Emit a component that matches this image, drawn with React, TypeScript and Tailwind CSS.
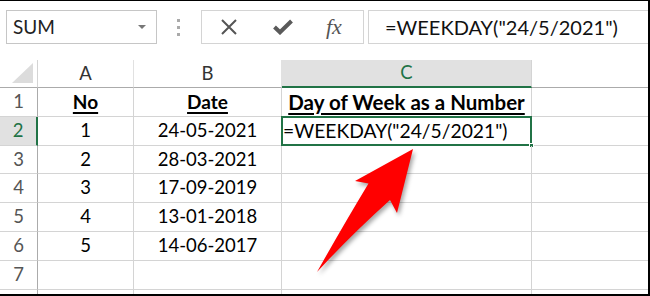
import React from "react";

const font = "font-['Lato','Noto_Sans',sans-serif]";

const rows = [
  { n: "1", a: "No", b: "Date", c: "Day of Week as a Number", head: true, h: "h-[29px]" },
  { n: "2", a: "1", b: "24-05-2021", c: '=WEEKDAY("24/5/2021")', sel: true, h: "h-[29px]" },
  { n: "3", a: "2", b: "28-03-2021", c: "", h: "h-[28px]" },
  { n: "4", a: "3", b: "17-09-2019", c: "", h: "h-[29px]" },
  { n: "5", a: "4", b: "13-01-2018", c: "", h: "h-[29px]" },
  { n: "6", a: "5", b: "14-06-2017", c: "", h: "h-[29px]" },
  { n: "7", a: "", b: "", c: "", h: "h-[29px]" },
];

export default function App() {
  return (
    <div
      className={`relative w-[650px] h-[296px] overflow-hidden bg-white border-t border-r-2 border-b-2 border-black ${font} text-[18.5px] text-black`}
    >
      {/* Toolbar */}
      <div className="h-[59px] flex items-start pt-[9px]">
        <div className="ml-[6px] w-[151px] h-[34px] border border-[#c6c6c6] flex items-center pl-[6px] pr-[10px]">
          <span className="text-[#222] text-[19px]">SUM</span>
          <span className="ml-auto w-0 h-0 border-l-[4px] border-r-[4px] border-t-[4px] border-l-transparent border-r-transparent border-t-[#777]" />
        </div>
        <div className="ml-[20px] w-[3px] h-[34px] flex flex-col items-center justify-center gap-[4px]">
          <span className="w-[3px] h-[3px] bg-[#aaa]" />
          <span className="w-[3px] h-[3px] bg-[#aaa]" />
          <span className="w-[3px] h-[3px] bg-[#aaa]" />
        </div>
        <div className="ml-[21px] w-[163px] h-[34px] border border-[#d4d4d4] flex items-center">
          <svg width="18" height="18" viewBox="0 0 18 18" className="ml-[18px]">
            <path d="M2 2 L16 16 M16 2 L2 16" stroke="#555" strokeWidth="2" fill="none" />
          </svg>
          <svg width="20" height="16" viewBox="0 0 20 16" className="ml-[35px]">
            <path d="M1.5 8 L7 13.3 L18.5 2" stroke="#5a5a5a" strokeWidth="4" fill="none" />
          </svg>
          <span className="ml-[33px] font-['Liberation_Serif',serif] italic text-[22px] text-[#555] leading-none">
            fx
          </span>
        </div>
        <div className="ml-[4px] flex-1 h-[34px] border border-r-0 border-[#d4d4d4] flex items-center pl-[16px]">
          <span className="text-[20px] text-[#111]">=WEEKDAY("24/5/2021")</span>
        </div>
      </div>

      {/* Column headers */}
      <div className="flex h-[28px]">
        <div className="w-[38px] relative border-b border-r border-b-[#ababab] border-r-[#d4d4d4]">
          <svg width="22" height="20" viewBox="0 0 22 20" className="absolute right-[3px] bottom-[4px]">
            <path d="M0 20 L21 20 L21 0 Z" fill="#dcdcdc" />
          </svg>
        </div>
        <div className="w-[96px] flex items-center justify-center border-b border-r border-b-[#ababab] border-r-[#e1e1e1] text-[#333]">
          A
        </div>
        <div className="w-[148px] flex items-center justify-center border-b border-r border-b-[#ababab] border-r-[#e1e1e1] text-[#333]">
          B
        </div>
        <div className="w-[250px] flex items-center justify-center bg-[#e1e1e1] border-b-2 border-r border-b-[#217346] border-r-[#d4d4d4] text-[#217346]">
          C
        </div>
        <div className="flex-1 border-b border-b-[#ababab]" />
      </div>

      {/* Rows */}
      {rows.map((r) => (
        <div key={r.n} className={`flex ${r.h}`}>
          <div
            className={`w-[38px] flex items-center justify-center border-b border-b-[#d4d4d4] ${
              r.sel
                ? "bg-[#e1e1e1] border-r-2 border-r-[#217346] text-[#217346]"
                : "border-r border-r-[#ababab] text-[#555]"
            }`}
          >
            {r.n}
          </div>
          <div className="w-[96px] flex items-center justify-center border-b border-r border-[#d4d4d4]">
            {r.head ? <span className="font-bold text-[19px] underline decoration-2 underline-offset-[3px]">{r.a}</span> : r.a}
          </div>
          <div className="w-[148px] flex items-center justify-center border-b border-r border-[#d4d4d4]">
            {r.head ? <span className="font-bold text-[19px] underline decoration-2 underline-offset-[3px]">{r.b}</span> : r.b}
          </div>
          <div
            className={`relative w-[250px] flex items-center border-b border-r border-[#d4d4d4] ${
              r.sel ? "justify-start pl-[1px]" : "justify-center"
            }`}
          >
            {r.head ? (
              <span className="font-bold text-[20.5px] underline decoration-2 underline-offset-[3px] whitespace-nowrap">{r.c}</span>
            ) : (
              <span className="whitespace-nowrap text-[19.3px]">{r.c}</span>
            )}
            {r.sel && (
              <>
                <div className="absolute -left-[1px] -top-[1px] -right-[1px] -bottom-[1px] border-2 border-[#217346]" />
                <div className="absolute -right-[3px] -bottom-[3px] w-[5px] h-[5px] bg-[#217346] border border-white" />
              </>
            )}
          </div>
          <div className="flex-1 border-b border-[#d4d4d4]" />
        </div>
      ))}
      <div className="flex h-[4px]">
        <div className="w-[38px] border-r border-r-[#ababab]" />
        <div className="w-[96px] border-r border-[#d4d4d4]" />
        <div className="w-[148px] border-r border-[#d4d4d4]" />
        <div className="w-[250px] border-r border-[#d4d4d4]" />
        <div className="flex-1" />
      </div>

      {/* Red arrow */}
      <svg
        className="absolute left-0 top-0 pointer-events-none"
        width="650"
        height="296"
        viewBox="0 -1 650 296"
        style={{ filter: "drop-shadow(2px 3px 2px rgba(0,0,0,0.35))" }}
      >
        <path
          d="M413 147 L355 179 L368.5 181.5 Q 344 222 317 270 Q 352 232 390 198 L 397 211 Z"
          fill="#ff0000"
        />
      </svg>
    </div>
  );
}
